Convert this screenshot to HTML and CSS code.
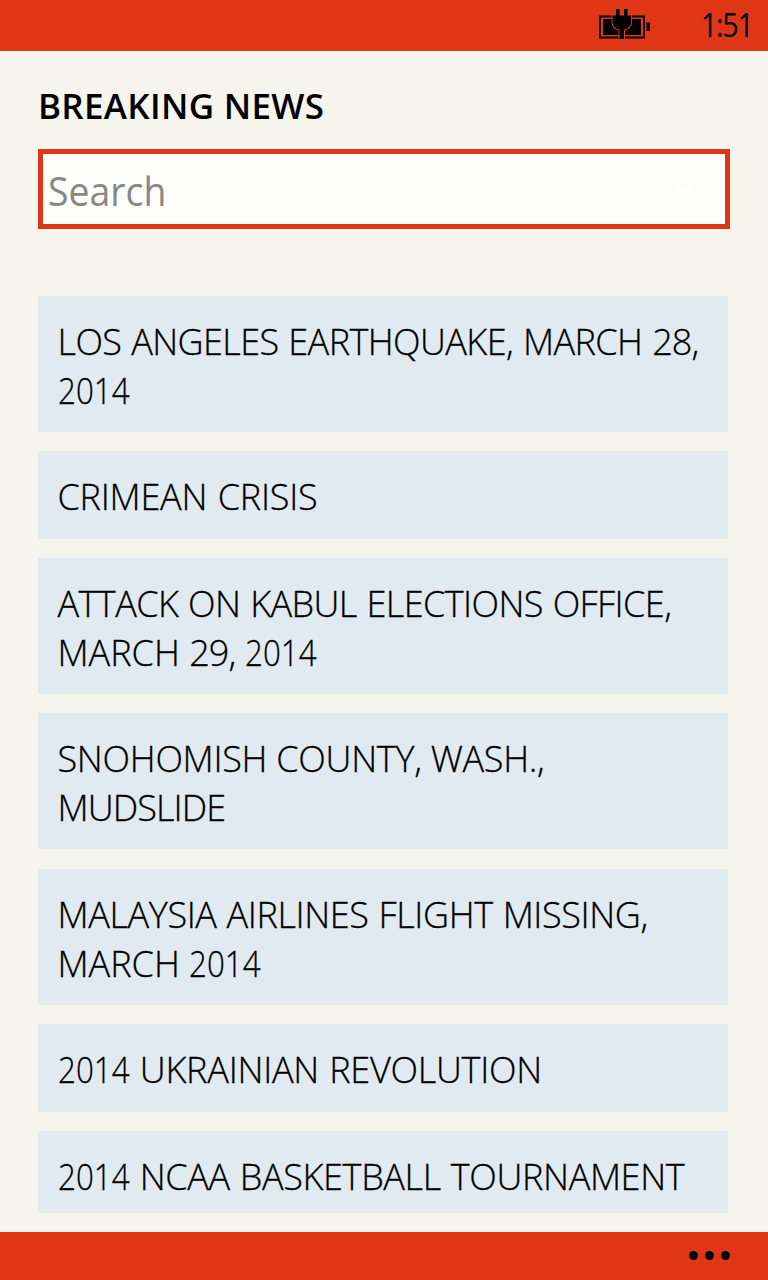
FILE: index.html
```html
<!DOCTYPE html>
<html lang="en">
<head>
<meta charset="utf-8">
<title>Breaking News</title>
<link rel="stylesheet" href="styles.css">
</head>
<body>
<div class="phone">
  <header class="status">
    <svg class="battery" width="52" height="32" viewBox="0 0 52 32">
      <path d="M1 7.500H45V28.500H1Z" fill="none" stroke="#000" stroke-width="1.800"/>
      <path d="M4 10H42V26H4Z" fill="#000"/>
      <path d="M47.500 13.500h3.500v8.500h-3.500z" fill="#000"/>
      <path d="M17 0h3.500v6.500h4.500V0h3.500v6.500h3.500v6c0 5-3 7.500-7 8v9.500h-4.500v-9.500c-4-.5-7-3-7-8v-6h3.500z" fill="#000" stroke="#df3618" stroke-width="2" paint-order="stroke"/>
    </svg>
    <time class="clock">1:51</time>
  </header>
  <main class="content">
    <h1 class="title">BREAKING NEWS</h1>
    <div class="search">
      <span class="placeholder">Search</span>
      <svg class="magnifier" width="20" height="20" viewBox="0 0 20 20" fill="none" stroke="#fff" stroke-width="2">
        <circle cx="12" cy="8" r="6"/><path d="M8 12 1.500 18.500" stroke-width="3"/>
      </svg>
    </div>
    <ul class="topics">
      <li class="topic tall"><span class="line l1">LOS ANGELES EARTHQUAKE, MARCH <span class="day">28,</span></span><span class="line"><span class="year">2014</span></span></li>
      <li class="topic"><span class="line l3">CRIMEAN CRISIS</span></li>
      <li class="topic tall"><span class="line l4">ATTACK ON KABUL ELECTIONS OFFICE,</span><span class="line">MARCH <span class="day">29,</span> <span class="year">2014</span></span></li>
      <li class="topic tall"><span class="line l6">SNOHOMISH COUNTY, WASH.,</span><span class="line l7">MUDSLIDE</span></li>
      <li class="topic tall"><span class="line l8">MALAYSIA AIRLINES FLIGHT MISSING,</span><span class="line">MARCH <span class="year">2014</span></span></li>
      <li class="topic"><span class="line l10"><span class="year">2014</span> UKRAINIAN REVOLUTION</span></li>
      <li class="topic"><span class="line l11"><span class="year">2014</span> NCAA BASKETBALL TOURNAMENT</span></li>
    </ul>
  </main>
  <footer class="appbar"><i class="dot"></i><i class="dot"></i><i class="dot"></i></footer>
</div>
</body>
</html>
```
FILE: styles.css
```css
* { box-sizing: border-box; }
body { margin: 0; font-family: "Open Sans", "Noto Sans", sans-serif; color: #000; }
.phone { width: 768px; height: 1280px; display: flex; flex-direction: column; background: #f6f5ed; overflow: hidden; }
.status { height: 51px; flex: none; background: #df3618; display: flex; justify-content: flex-end; align-items: flex-start; padding: 9px 15px 0 0; }
.battery { margin-right: 50px; flex: none; }
.clock { width: 52px; font-size: 32px; line-height: 32px; letter-spacing: -1.5px; white-space: nowrap; transform: scaleX(.9); transform-origin: left; }
.content { height: 1162px; flex: none; padding: 0 40px 0 38px; overflow: hidden; }
.title { margin: 31px 0 0; height: 49px; line-height: 48px; font-size: 35px; font-weight: 600; letter-spacing: .3px; white-space: nowrap; }
.search { margin-top: 18px; width: 692px; height: 80px; border: 5px solid #df3618; background: #fdfdfb; display: flex; align-items: center; justify-content: space-between; padding: 0 33px 0 5px; }
.placeholder { font-size: 40px; color: #888886; line-height: 56px; padding-top: 4px; transform: scaleX(.935); transform-origin: left; }
.topics { list-style: none; margin: 67px 0 0; padding: 0; display: flex; flex-direction: column; gap: 19.17px; }
.topic { flex: none; height: 88px; background: #e2eaf1; padding: 21px 0 0 19.5px; }
.tall { height: 136px; }
.line { display: block; width: max-content; line-height: 49px; font-size: 36px; font-weight: 300; white-space: nowrap; -webkit-text-stroke: .3px #000; }
.day { letter-spacing: -.9px; }
.year { display: inline-block; letter-spacing: 0; transform: scaleX(.87); transform-origin: left; margin-right: -10px; }
.l1, .l4 { letter-spacing: -.58px; word-spacing: 1px; }
.l3 { letter-spacing: -.25px; word-spacing: 1.5px; }
.l6 { letter-spacing: -.28px; }
.l8 { letter-spacing: -.38px; word-spacing: 1px; }
.l7 { letter-spacing: -.9px; }
.l10 { letter-spacing: -.25px; word-spacing: 1px; }
.l11 { letter-spacing: -.36px; word-spacing: 1px; }
.appbar { margin-top: auto; height: 48px; flex: none; background: #df3618; display: flex; justify-content: flex-end; align-items: center; gap: 7px; padding: 0 38px 1px 0; }
.dot { width: 9px; height: 9px; border-radius: 50%; background: #000; }
```
